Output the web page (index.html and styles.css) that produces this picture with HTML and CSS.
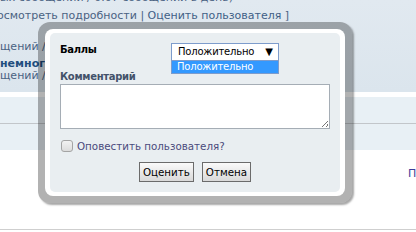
FILE: index.html
```html
<!DOCTYPE html>
<html>
<head>
<meta charset="utf-8">
<link rel="stylesheet" href="styles.css">
</head>
<body>
<div class="page">
  <div class="top">
    <div class="line l1">ых сообщений / 0.07 сообщений в день)</div>
    <div class="line l2">осмотреть подробности | <span class="lnk">Оценить пользователя</span> ]</div>
    <div class="line l3">щений / 0.00</div>
    <div class="line l4">немногословный</div>
    <div class="line l5">щений / 0.00</div>
  </div>
  <div class="sep"></div>
  <div class="row r1"></div>
  <div class="row r2"></div>
  <div class="white">
    <div class="ptext">Профиль</div>
  </div>
  <div class="bottom-line"></div>

  <div class="dialog">
    <div class="ring">
      <div class="content">
        <div class="score-row">
          <div class="lbl">Баллы</div>
          <div class="select">
            <span>Положительно</span>
            <span class="arrow">▼</span>
            <div class="dropdown">Положительно</div>
          </div>
        </div>
        <div class="lbl comment">Комментарий</div>
        <div class="textarea"><span class="grip"></span></div>
        <div class="check-row">
          <span class="checkbox"></span>
          <span class="check-label">Оповестить пользователя?</span>
        </div>
        <div class="buttons">
          <button class="btn">Оценить</button>
          <button class="btn">Отмена</button>
        </div>
      </div>
    </div>
  </div>
</div>
</body>
</html>
```
FILE: styles.css
```css
html, body {
  margin: 0;
  padding: 0;
  overflow: hidden;
  background: #ffffff;
}
body {
  font-family: "DejaVu Sans", Verdana, sans-serif;
  font-size: 11px;
  width: 416px;
  height: 232px;
}
.page {
  position: relative;
  width: 416px;
  height: 232px;
  overflow: hidden;
}
.top {
  height: 92px;
  background: linear-gradient(#e1e9f0, #dbe5ed);
  overflow: hidden;
  color: #4a6282;
}
.line {
  white-space: nowrap;
  line-height: 14px;
}
.l1 { margin-top: -9px; }
.l2 { margin-top: 4px; margin-left: -3px; }
.lnk { color: #3f5f86; }
.l3 { margin-top: 17px; }
.l4 { margin-top: 3px; font-weight: bold; color: #1f4d7e; }
.l5 { margin-top: -2px; }
.sep {
  height: 5px;
  background: #ffffff;
}
.row {
  height: 26px;
  background: #e8f0f5;
}
.r1 { border-bottom: 1px solid #c2c6ca; }
.white {
  height: 79px;
  background: #ffffff;
}
.ptext {
  padding-left: 408px;
  padding-top: 17px;
  color: #3b3f9a;
  white-space: nowrap;
  line-height: 14px;
}
.bottom-line {
  height: 1px;
  background: #cfcfcf;
}

/* dialog overlay */
.dialog {
  position: absolute;
  left: 38px;
  top: 22px;
  padding: 7px;
  background: rgba(0, 0, 0, 0.3);
  border-radius: 12px;
  box-shadow: 2px 2px 2px rgba(0, 0, 0, 0.35);
  font-size: 10.3px;
}
.ring {
  background: #ffffff;
  padding: 4px 5px;
  border-radius: 8px;
}
.content {
  width: 270px;
  padding: 10px;
  background: #e9eef1;
  border-radius: 5px;
  color: #000;
}
.score-row {
  display: flex;
  align-items: center;
  height: 18px;
}
.lbl {
  font-weight: bold;
  font-size: 10px;
  letter-spacing: -0.3px;
  width: 111px;
  line-height: 14px;
}
.score-row .lbl { margin-top: -4px; }
.select {
  position: relative;
  box-sizing: border-box;
  width: 108px;
  height: 18px;
  border: 1px solid #7d9ccc;
  background: #ffffff;
  display: flex;
  align-items: center;
  justify-content: space-between;
  padding: 0 5px 0 6px;
  line-height: 16px;
  font-size: 10px;
  letter-spacing: -0.2px;
}
.arrow {
  font-size: 10px;
  letter-spacing: 0;
}
.dropdown {
  position: absolute;
  left: -1px;
  top: 17px;
  width: 108px;
  box-sizing: border-box;
  height: 13px;
  line-height: 12px;
  padding-left: 5px;
  background: #3399ff;
  color: #ffffff;
  border: 1px solid #7d9ccc;
  border-top: none;
}
.comment {
  margin-top: 9px;
  color: #43526a;
  width: auto;
}
.textarea {
  position: relative;
  box-sizing: border-box;
  width: 270px;
  height: 45px;
  background: #ffffff;
  border: 1px solid #a5adb5;
}
.grip {
  position: absolute;
  right: 1px;
  bottom: 1px;
  width: 6px;
  height: 6px;
  background: linear-gradient(135deg, transparent 45%, #777 45%, #777 55%, transparent 55%, transparent 75%, #777 75%, #777 85%, transparent 85%);
}
.check-row {
  margin-top: 11px;
  display: flex;
  align-items: center;
  height: 12px;
}
.checkbox {
  box-sizing: border-box;
  width: 12px;
  height: 12px;
  margin-left: 1px;
  border: 1px solid #a4a4a4;
  border-radius: 3px;
  background: linear-gradient(#f2f2f2, #dcdcdc);
}
.check-label {
  margin-left: 4px;
  color: #4a4a7c;
  line-height: 14px;
}
.buttons {
  margin-top: 10px;
  display: flex;
  justify-content: center;
  gap: 8px;
}
.btn {
  box-sizing: border-box;
  height: 20px;
  padding: 0 3px;
  font-family: "DejaVu Sans", Verdana, sans-serif;
  font-size: 10.3px;
  color: #000;
  border: 1px solid #6b6b6b;
  background: linear-gradient(#fafafa, #d9d9d9);
  border-radius: 0;
  margin: 0;
}
```
